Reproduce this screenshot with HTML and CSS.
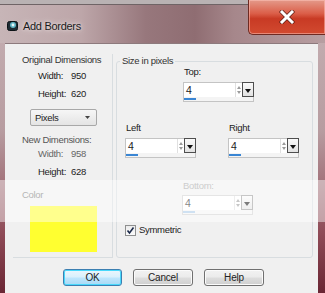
FILE: index.html
```html
<!DOCTYPE html>
<html lang="en">
<head>
    <meta charset="UTF-8">
    <title>Add Borders</title>
    <link rel="stylesheet" href="styles.css">
</head>
<body>
    <div class="window">
        <div class="titlebar">
            <svg class="app-icon" width="11" height="11" viewBox="0 0 11 11">
                <rect x="0.5" y="1.5" width="10" height="9" rx="2" fill="#1d2b33" stroke="#0b1216"/>
                <circle cx="6" cy="5" r="3" fill="#5fb4c4"/>
                <circle cx="6" cy="5" r="1.4" fill="#e8f6f8"/>
            </svg>
            <span class="title">Add Borders</span>
            <div class="close-btn">
                <svg width="16" height="14" viewBox="0 0 16 14">
                    <path d="M3 2 L13 12 M13 2 L3 12" stroke="#5a1a12" stroke-width="4.4" stroke-linecap="square"/>
                    <path d="M3 2 L13 12 M13 2 L3 12" stroke="#fff" stroke-width="3" stroke-linecap="square"/>
                </svg>
            </div>
        </div>

        <div class="client">
            <div class="columns">
                <div class="side">
                    <div class="side-label">Original Dimensions</div>
                    <div class="dim-row"><span>Width:</span><span>950</span></div>
                    <div class="dim-row"><span>Height:</span><span>620</span></div>
                    <div class="unit-select">
                        <span>Pixels</span>
                        <svg width="5" height="3" viewBox="0 0 5 3"><path d="M0 0 L5 0 L2.5 3 Z" fill="#444"/></svg>
                    </div>
                    <div class="side-label new">New Dimensions:</div>
                    <div class="dim-row muted"><span>Width:</span><span>958</span></div>
                    <div class="dim-row"><span>Height:</span><span>628</span></div>
                    <div class="side-label color">Color</div>
                    <div class="swatch"></div>
                </div>

                <div class="size-group">
                    <div class="legend">Size in pixels</div>

                    <div class="field-row top">
                        <div class="field-cell">
                            <div class="field-label">Top:</div>
                            <div class="spin-field">
                                <span class="value">4</span>
                                <span class="spin"><i class="up"></i><i class="down"></i></span>
                                <span class="drop"></span>
                                <span class="bar"></span>
                            </div>
                        </div>
                    </div>

                    <div class="field-row middle">
                        <div class="field-cell">
                            <div class="field-label">Left</div>
                            <div class="spin-field">
                                <span class="value">4</span>
                                <span class="spin"><i class="up"></i><i class="down"></i></span>
                                <span class="drop"></span>
                                <span class="bar"></span>
                            </div>
                        </div>
                        <div class="field-cell">
                            <div class="field-label">Right</div>
                            <div class="spin-field">
                                <span class="value">4</span>
                                <span class="spin"><i class="up"></i><i class="down"></i></span>
                                <span class="drop"></span>
                                <span class="bar"></span>
                            </div>
                        </div>
                    </div>

                    <div class="field-row bottom">
                        <div class="field-cell disabled">
                            <div class="field-label">Bottom:</div>
                            <div class="spin-field">
                                <span class="value">4</span>
                                <span class="spin"><i class="up"></i><i class="down"></i></span>
                                <span class="drop"></span>
                                <span class="bar"></span>
                            </div>
                        </div>
                    </div>

                    <label class="check-row">
                        <span class="checkbox">
                            <svg width="9" height="9" viewBox="0 0 9 9"><path d="M1.5 4.5 L3.5 7 L7.5 1.5" fill="none" stroke="#1c2a4a" stroke-width="1.6"/></svg>
                        </span>
                        <span>Symmetric</span>
                    </label>
                </div>
            </div>

            <div class="buttons">
                <button class="btn default">OK</button>
                <button class="btn">Cancel</button>
                <button class="btn">Help</button>
            </div>

            <div class="watermark"></div>
        </div>
    </div>
</body>
</html>
```

FILE: styles.css
```css
:root {
    --face: #f0f0f0;
    --text: #222;
    --group-line: #d8dde0;
}

body {
    margin: 0;
    width: 325px;
    height: 293px;
    overflow: hidden;
    font-family: 'Liberation Sans', Arial, sans-serif;
    font-size: 9.5px;
    letter-spacing: -0.3px;
    color: var(--text);
}

.window {
    height: 293px;
    display: flex;
    flex-direction: column;
    background: linear-gradient(180deg, #c7b2b5 0%, #b79ca0 45%, #8e4a56 80%, #6a2634 100%);
}

/* title bar */

.titlebar {
    height: 43px;
    display: flex;
    align-items: flex-start;
    border-top: 4px solid #b9b2b3;
    box-sizing: border-box;
    background: linear-gradient(90deg, #c7b5b7 0%, #bda6a9 25%, #97777c 45%, #8f6d72 60%, #a6878b 72%, #b79ea1 100%);
    box-shadow: inset 0 1px 0 #6f6466;
}

.app-icon {
    margin: 16px 0 0 7px;
}

.title {
    margin: 16px 0 0 5px;
    font-size: 11px;
    letter-spacing: -0.3px;
    color: #1b1b1b;
    text-shadow: 0 0 6px #e8dede, 0 0 3px #e8dede;
}

.close-btn {
    margin-left: auto;
    width: 77px;
    height: 35px;
    margin-top: -4px;
    border: 1px solid #6e2a22;
    border-top: none;
    border-right: none;
    border-radius: 0 0 0 5px;
    box-sizing: border-box;
    display: flex;
    align-items: center;
    justify-content: center;
    background: linear-gradient(180deg, #e49a8a 0%, #db5e48 40%, #c83a24 55%, #d24a30 100%);
    box-shadow: inset 0 0 0 1px rgba(255, 200, 190, 0.5);
}

/* client area */

.client {
    flex: 1;
    margin: 0 7px 0 5px;
    background: var(--face);
    border-top: 1px solid #8d7a7d;
    position: relative;
}

.columns {
    display: flex;
    margin: 10px 0 0 8px;
}

.side {
    width: 100px;
    height: 204px;
    box-sizing: border-box;
    border-right: 1px solid var(--group-line);
    border-bottom: 1px solid var(--group-line);
}

.side-label {
    line-height: 11px;
    padding-left: 9px;
    color: #333;
}

.side-label.new {
    margin-top: 8px;
    color: #555;
}

.side-label.color {
    margin-top: 8px;
    color: #777;
}

.dim-row {
    display: grid;
    grid-template-columns: 33px auto;
    line-height: 18px;
    padding-left: 25px;
}

.dim-row:nth-child(2) {
    margin-top: 2px;
}

.dim-row.muted {
    color: #666;
}

.unit-select {
    margin: 6px 0 0 17px;
    width: 67px;
    height: 17px;
    box-sizing: border-box;
    border: 1px solid #a8a8a8;
    border-radius: 2px;
    background: linear-gradient(180deg, #f6f6f6, #e4e4e4);
    display: flex;
    align-items: center;
    justify-content: space-between;
    padding: 0 6px 0 4px;
}

.swatch {
    margin: 6px 0 0 17px;
    width: 67px;
    height: 46px;
    background: #ffff30;
}

/* size group */

.size-group {
    margin: 7px 0 0 3px;
    width: 197px;
    height: 197px;
    box-sizing: border-box;
    border: 1px solid var(--group-line);
    border-radius: 3px;
}

.legend {
    width: fit-content;
    margin: -7px 0 0 3px;
    padding: 0 2px;
    line-height: 12px;
    background: var(--face);
    color: #333;
}

.field-row {
    display: flex;
    gap: 32px;
}

.field-row.top {
    margin: -1px 0 0 66px;
}

.field-row.middle {
    margin: 20px 0 0 8px;
}

.field-row.bottom {
    margin: 22px 0 0 65px;
}

.field-label {
    line-height: 12px;
    padding-left: 1px;
    margin-bottom: 4px;
}

.field-row.bottom .field-label {
    margin-bottom: 3px;
}

.spin-field {
    width: 71px;
    height: 20px;
    box-sizing: border-box;
    border: 1px solid #c4c4c4;
    background: #f4f4f4;
    display: grid;
    grid-template-columns: 1fr 7px 11px;
    grid-template-rows: 14px 4px;
}

.spin-field .value {
    background: #fff;
    padding-left: 2px;
    line-height: 14px;
    font-size: 10.5px;
}

.spin {
    background: #fff;
    display: flex;
    flex-direction: column;
    justify-content: center;
    align-items: center;
    gap: 2px;
    border-left: 1px solid #e0e0e0;
}

.spin i {
    width: 0;
    height: 0;
    border-left: 2.5px solid transparent;
    border-right: 2.5px solid transparent;
}

.spin .up {
    border-bottom: 3px solid #9a9a9a;
}

.spin .down {
    border-top: 3px solid #9a9a9a;
}

.drop {
    margin: -1px -1px 0 0;
    border: 1px solid #4e4e4e;
    background: linear-gradient(180deg, #fafafa, #e2e2e2);
    position: relative;
}

.drop::after {
    content: "";
    position: absolute;
    left: 2px;
    top: 6px;
    border-left: 3px solid transparent;
    border-right: 3px solid transparent;
    border-top: 4px solid #111;
}

.bar {
    grid-column: 1 / 4;
    position: relative;
}

.bar::before {
    content: "";
    position: absolute;
    left: 0;
    top: 1px;
    width: 12px;
    height: 2px;
    background: #3a86d4;
}

.field-cell.disabled .field-label {
    color: #a4a4a4;
}

.field-cell.disabled .spin-field {
    border-color: #d0d0d0;
}

.field-cell.disabled .drop {
    border-color: #9a9a9a;
}

.field-cell.disabled .bar::before {
    background: #a8c8e8;
}

.check-row {
    display: flex;
    align-items: center;
    gap: 3px;
    margin: 9px 0 0 8px;
    line-height: 12px;
}

.checkbox {
    width: 11px;
    height: 11px;
    box-sizing: border-box;
    border: 1px solid #8e8f8f;
    background: linear-gradient(180deg, #ececec, #fbfbfb);
    display: flex;
    align-items: center;
    justify-content: center;
}

/* buttons */

.buttons {
    display: flex;
    gap: 11px;
    margin: 11px 0 0 58px;
}

.btn {
    width: 60px;
    height: 17px;
    padding: 0;
    font-family: inherit;
    font-size: 10px;
    letter-spacing: -0.2px;
    color: var(--text);
    border: 1px solid #707070;
    border-radius: 3px;
    background: linear-gradient(180deg, #f2f2f2 0%, #ebebeb 48%, #dddddd 52%, #cfcfcf 100%);
    box-shadow: inset 0 0 0 1px #fbfbfb;
}

.btn.default {
    width: 59px;
    border-color: #3c7fb1;
    background: linear-gradient(180deg, #eaf6fd 0%, #d9f0fc 48%, #bee6fd 52%, #a7d9f5 100%);
    box-shadow: inset 0 0 0 1px #48d8fb;
}

/* photo host watermark band */

.watermark {
    position: absolute;
    left: -5px;
    right: -7px;
    top: 136px;
    height: 42px;
    background: rgba(255, 255, 255, 0.45);
}
```
